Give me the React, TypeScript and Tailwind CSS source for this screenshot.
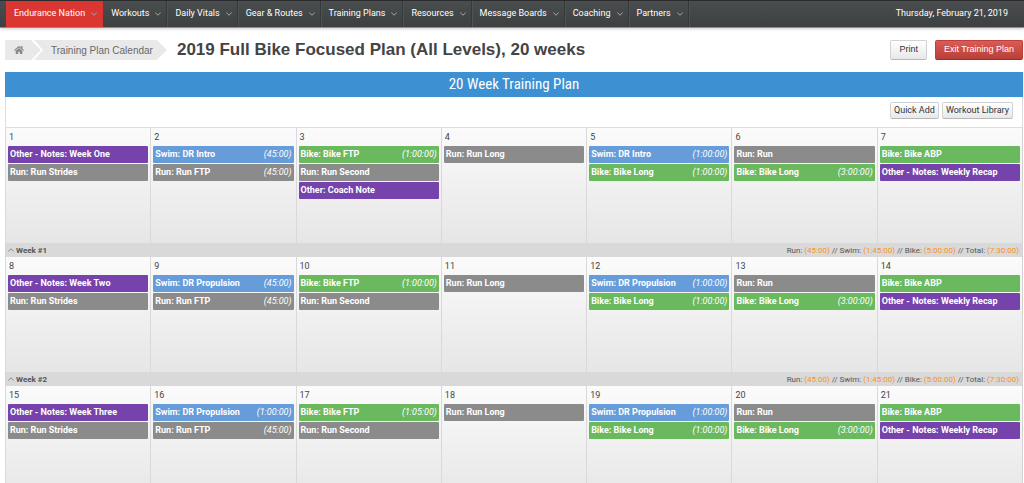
import { FaHome } from "react-icons/fa";

type Kind = "other" | "run" | "swim" | "bike";
type Workout = { kind: Kind; title: string; time?: string };

const kindColors: Record<Kind, string> = {
  other: "bg-[#7643ac]",
  run: "bg-[#8b8b8b]",
  swim: "bg-[#659cd9]",
  bike: "bg-[#6ab95f]",
};

const menu = [
  "Endurance Nation",
  "Workouts",
  "Daily Vitals",
  "Gear & Routes",
  "Training Plans",
  "Resources",
  "Message Boards",
  "Coaching",
  "Partners",
];

const totals = [
  ["Run", "45:00"],
  ["Swim", "1:45:00"],
  ["Bike", "5:00:00"],
  ["Total", "7:30:00"],
];

//every week has the same shape, only the names and a few times change
const makeWeek = (
  name: string,
  swim: string,
  swimTime: string,
  ftpTime: string,
  coachNote: boolean
): Workout[][] => [
  [
    { kind: "other", title: "Other - Notes: Week " + name },
    { kind: "run", title: "Run: Run Strides" },
  ],
  [
    { kind: "swim", title: "Swim: " + swim, time: swimTime },
    { kind: "run", title: "Run: Run FTP", time: "45:00" },
  ],
  [
    { kind: "bike", title: "Bike: Bike FTP", time: ftpTime },
    { kind: "run", title: "Run: Run Second" },
    ...(coachNote
      ? [{ kind: "other" as Kind, title: "Other: Coach Note" }]
      : []),
  ],
  [{ kind: "run", title: "Run: Run Long" }],
  [
    { kind: "swim", title: "Swim: " + swim, time: "1:00:00" },
    { kind: "bike", title: "Bike: Bike Long", time: "1:00:00" },
  ],
  [
    { kind: "run", title: "Run: Run" },
    { kind: "bike", title: "Bike: Bike Long", time: "3:00:00" },
  ],
  [
    { kind: "bike", title: "Bike: Bike ABP" },
    { kind: "other", title: "Other - Notes: Weekly Recap" },
  ],
];

const weeks = [
  makeWeek("One", "DR Intro", "45:00", "1:00:00", true),
  makeWeek("Two", "DR Propulsion", "45:00", "1:00:00", false),
  makeWeek("Three", "DR Propulsion", "1:00:00", "1:05:00", false),
];

const Caret = ({ className }: { className: string }) => (
  <svg viewBox="0 0 6 4" className={className} aria-hidden="true">
    <path d="M0.3 0.6 L3 3.2 L5.7 0.6" fill="none" stroke="currentColor" />
  </svg>
);

const NavBar = () => (
  <nav className="flex h-7 items-stretch border-t border-b border-t-[#2b2b2e] border-b-[#8e8e8e] bg-linear-to-b from-[#4a4d4e] to-[#3d4041] pl-[6px] text-[9px] text-white shadow-[0_1px_3px_rgba(0,0,0,0.2)]">
    {menu.map((item, i) => (
      <a
        key={item}
        href="#"
        className={
          "flex items-center gap-[6px] border-r pr-[5px] pl-2 whitespace-nowrap " +
          (i == 0
            ? "border-[#d93630] bg-[#db3732]"
            : "border-[#36393a] shadow-[1px_0_0_#505354]")
        }
      >
        {item}
        <Caret className="h-1 w-[6px] text-[#a5a5a5]" />
      </a>
    ))}
    <span className="ml-auto flex items-center pr-4">
      Thursday, February 21, 2019
    </span>
  </nav>
);

const Header = () => (
  <header className="flex items-center pt-3 pr-px pl-[5px] font-['Liberation_Sans',Arial,sans-serif]">
    <div className="flex h-5 text-[10px] text-[#686868]">
      <a
        href="#"
        aria-label="Home"
        className="flex w-9 items-center bg-[#e9e9e9] pl-[9px] [clip-path:polygon(0_0,26px_0,100%_50%,26px_100%,0_100%)]"
      >
        <FaHome className="size-[10px] text-[#888888]" />
      </a>
      <a
        href="#"
        className="-ml-[7px] flex items-center bg-[#e9e9e9] pr-[14px] pl-[17px] whitespace-nowrap [clip-path:polygon(0_0,calc(100%-10px)_0,100%_50%,calc(100%-10px)_100%,0_100%,9px_50%)]"
      >
        Training Plan Calendar
      </a>
    </div>
    <h1 className="ml-[10px] text-[17px] leading-5 font-bold text-[#444444]">
      2019 Full Bike Focused Plan (All Levels), 20 weeks
    </h1>
    <div className="ml-auto flex gap-2 text-[9px] whitespace-nowrap">
      <button className="h-5 rounded-[2px] border border-[#d2d2d2] border-b-[#b8b8b8] bg-linear-to-b from-white to-[#e8e8e8] px-2 text-[#333333]">
        Print
      </button>
      <button className="h-5 rounded-[2px] border border-[#bd403a] border-b-[#96302b] bg-linear-to-b from-[#dc5a55] to-[#b83f39] px-2 text-white">
        Exit Training Plan
      </button>
    </div>
  </header>
);

const Calendar = () => (
  <table className="w-full table-fixed border-separate border-spacing-0 border-r border-[#d4d4d4]">
    {weeks.map((week, w) => (
      <tbody key={w}>
        <tr>
          {week.map((day, d) => (
            <td
              key={d}
              className="h-[115px] border-l border-[#d9d9d9] bg-linear-to-b from-[#fbfbfb] to-[#e6e6e6] px-[2px] pt-[3px] align-top"
            >
              <p className="mb-[3px] pl-px text-[9px] leading-3 text-[#444444]">
                {w * 7 + d + 1}
              </p>
              <div className="flex flex-col gap-px">
                {day.map((workout) => (
                  <a
                    key={workout.title}
                    href="#"
                    className={
                      "flex h-[17px] items-center justify-between rounded-[1px] px-[2px] text-[9px] whitespace-nowrap text-white " +
                      kindColors[workout.kind]
                    }
                  >
                    <span className="font-bold">{workout.title}</span>
                    {workout.time && <i>({workout.time})</i>}
                  </a>
                ))}
              </div>
            </td>
          ))}
        </tr>
        {w < weeks.length - 1 && (
          <tr>
            <td
              colSpan={7}
              className="h-[14px] border-l border-[#d4d4d4] bg-[#d9d9d9] pt-[2px] pr-[3px] pl-[2px] text-[8px] leading-3 text-[#555555]"
            >
              <div className="flex justify-between">
                <span className="flex gap-[2px] font-bold">
                  <Caret className="mt-[3px] h-1 w-[6px] rotate-180 text-[#888888]" />
                  Week #{w + 1}
                </span>
                <span>
                  {totals.map(([label, time], i) => (
                    <span key={label}>
                      {i > 0 && " // "}
                      {label}: <span className="text-[#f7931e]">({time})</span>
                    </span>
                  ))}
                </span>
              </div>
            </td>
          </tr>
        )}
      </tbody>
    ))}
  </table>
);

const App = () => {
  return (
    <div className="h-screen overflow-hidden bg-white font-[Roboto,'Liberation_Sans',sans-serif]">
      <NavBar />
      <Header />
      <main className="mt-3 mr-px ml-[5px]">
        <h2 className="bg-[#3d91d2] text-center font-['Roboto_Condensed','Open_Sans_Condensed_Light','Liberation_Sans_Narrow',Roboto,sans-serif] text-[15px] leading-[25px] text-white">
          20 Week Training Plan
        </h2>
        <div className="flex h-[31px] items-start justify-end gap-[3px] border-x border-b border-[#dedede] pt-[5px] pr-[9px] text-[9px] text-[#333333]">
          <button className="h-[17px] rounded-[2px] border border-[#d2d2d2] border-b-[#b8b8b8] bg-linear-to-b from-white to-[#e8e8e8] px-[3px]">
            Quick Add
          </button>
          <button className="h-[17px] rounded-[2px] border border-[#d2d2d2] border-b-[#b8b8b8] bg-linear-to-b from-white to-[#e8e8e8] px-[3px]">
            Workout Library
          </button>
        </div>
        <Calendar />
      </main>
    </div>
  );
};

export default App;
